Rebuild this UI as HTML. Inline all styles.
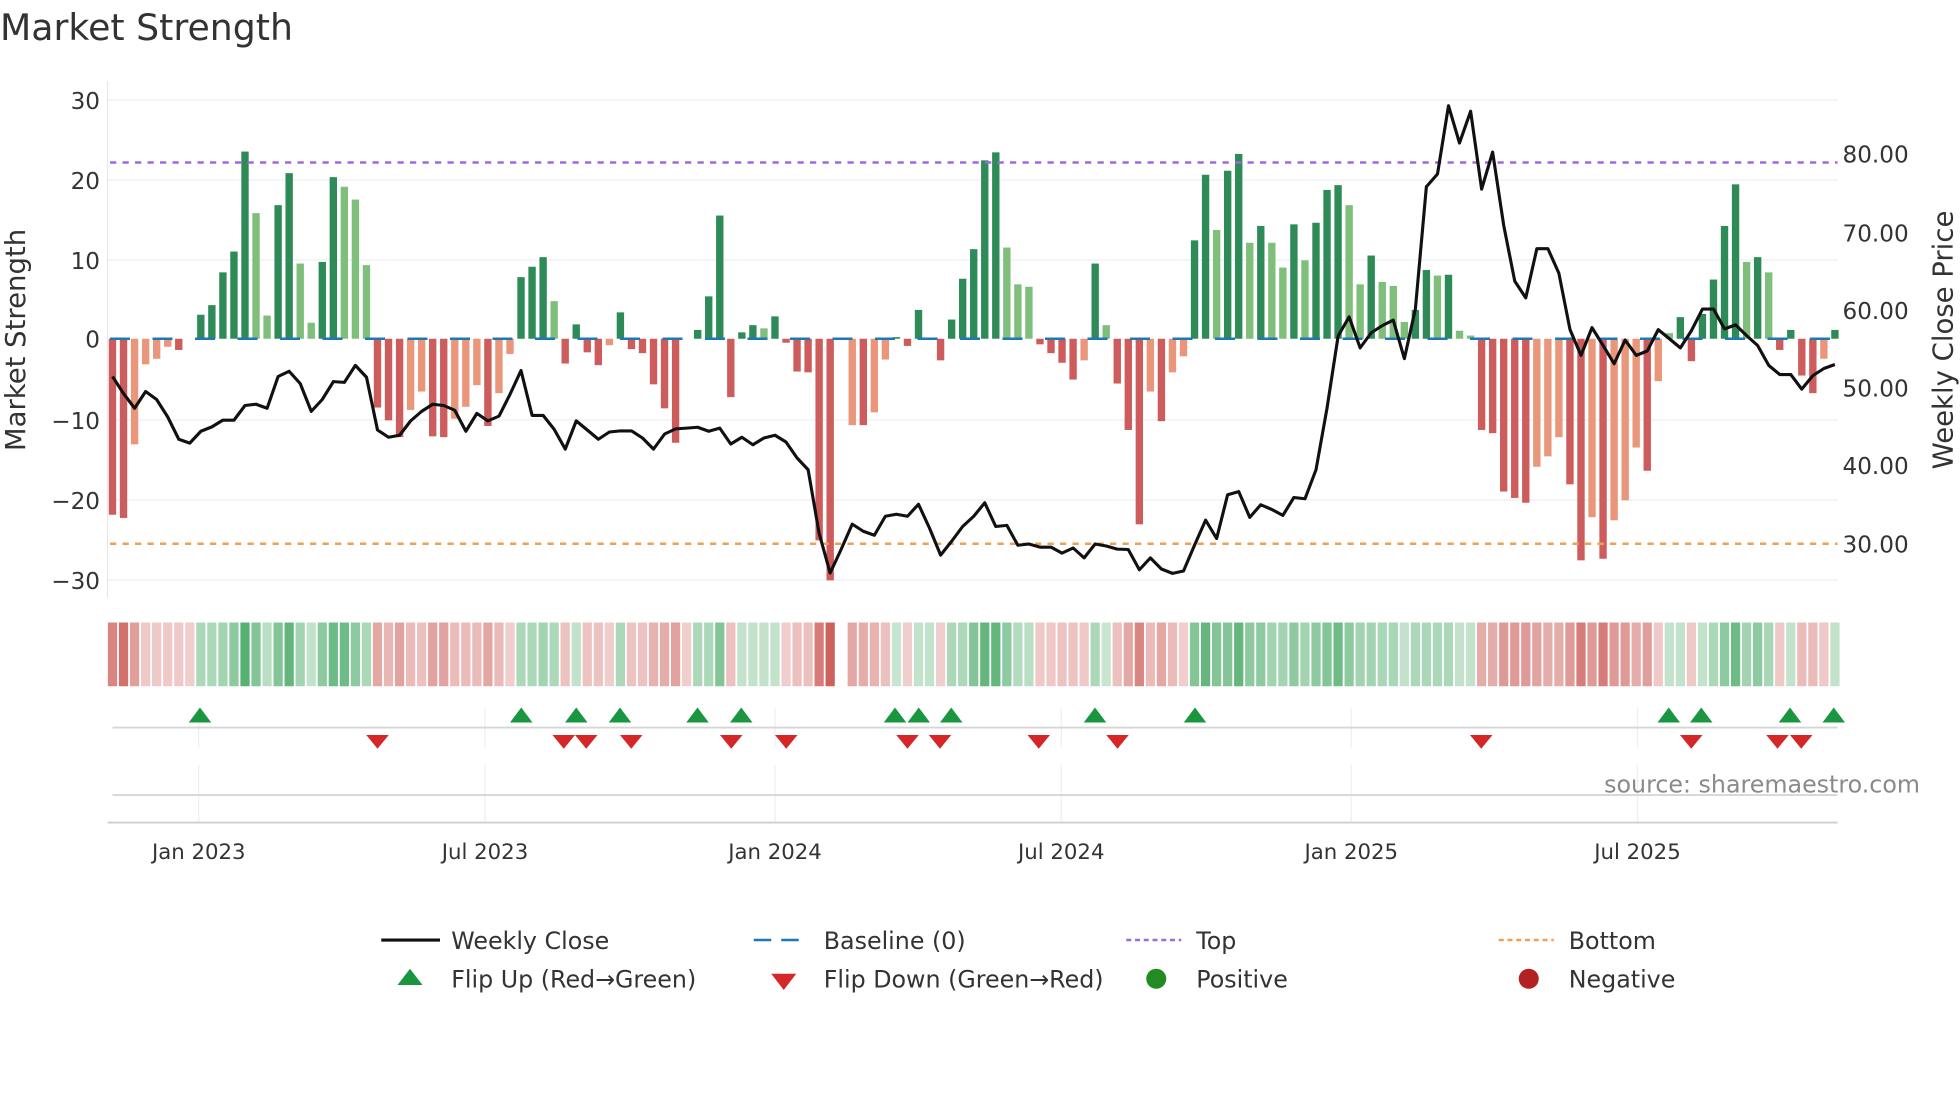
<!DOCTYPE html>
<html><head><meta charset="utf-8"><style>
html,body{margin:0;padding:0;background:#fff;}
svg{display:block;font-family:"DejaVu Sans","Liberation Sans",sans-serif;}
</style></head><body>
<svg id="s" width="1960" height="1102" viewBox="0 0 1568 881.6" xmlns="http://www.w3.org/2000/svg">
<rect width="1568" height="882" fill="#fff"/>
<text x="0" y="32" font-size="29" fill="#333">Market Strength</text>
<g id="grid" stroke="#eceff4" stroke-width="1">
<line x1="86" x2="1470" y1="80" y2="80"/><line x1="86" x2="1470" y1="144" y2="144"/><line x1="86" x2="1470" y1="208" y2="208"/><line x1="86" x2="1470" y1="336" y2="336"/><line x1="86" x2="1470" y1="400" y2="400"/><line x1="86" x2="1470" y1="464" y2="464"/>
</g>
<line x1="86" x2="86" y1="65" y2="478" stroke="#e6e8ee"/>
<g font-size="18.5" fill="#333" text-anchor="end">
<text x="80" y="87">30</text><text x="80" y="151">20</text><text x="80" y="215">10</text><text x="80" y="278">0</text><text x="80" y="343">−10</text><text x="80" y="407">−20</text><text x="80" y="471">−30</text>
</g>
<g font-size="18.5" fill="#333">
<text x="1474" y="130">80.00</text><text x="1474" y="193">70.00</text><text x="1474" y="255">60.00</text><text x="1474" y="317">50.00</text><text x="1474" y="379">40.00</text><text x="1474" y="442">30.00</text>
</g>
<text transform="translate(20,272) rotate(-90)" font-size="22" fill="#333" text-anchor="middle">Market Strength</text>
<text transform="translate(1562,272) rotate(-90)" font-size="22" fill="#333" text-anchor="middle">Weekly Close Price</text>
<g id="bars"></g>
<line x1="88" x2="1470" y1="271" y2="271" stroke="#1f77b4" stroke-width="2" stroke-dasharray="16,18"/>
<line x1="88" x2="1470" y1="130" y2="130" stroke="#9b6bdc" stroke-width="2" stroke-dasharray="5,5"/>
<line x1="88" x2="1470" y1="435" y2="435" stroke="#f0a050" stroke-width="2" stroke-dasharray="5,5"/>
<polyline id="price" fill="none" stroke="#111" stroke-width="2.5" stroke-linejoin="round"/>
<g id="heat"></g>
<g stroke="#eceff4"><line x1="159" x2="159" y1="566" y2="598"/><line x1="388" x2="388" y1="566" y2="598"/><line x1="620" x2="620" y1="566" y2="598"/><line x1="849" x2="849" y1="566" y2="598"/><line x1="1081" x2="1081" y1="566" y2="598"/><line x1="1310" x2="1310" y1="566" y2="598"/>
<line x1="159" x2="159" y1="612" y2="658"/><line x1="388" x2="388" y1="612" y2="658"/><line x1="620" x2="620" y1="612" y2="658"/><line x1="849" x2="849" y1="612" y2="658"/><line x1="1081" x2="1081" y1="612" y2="658"/><line x1="1310" x2="1310" y1="612" y2="658"/></g>
<line x1="90" x2="1470" y1="582" y2="582" stroke="#d6d6d6" stroke-width="1.5"/>
<line x1="90" x2="1470" y1="636" y2="636" stroke="#d6d6d6" stroke-width="1.5"/>
<line x1="86" x2="1470" y1="658" y2="658" stroke="#cfcfcf" stroke-width="1.5"/>
<g id="marks"></g>
<text x="1536" y="634" font-size="19" fill="#8a8a8a" text-anchor="end">source: sharemaestro.com</text>
<g font-size="17" fill="#333" text-anchor="middle">
<text x="159" y="687">Jan 2023</text><text x="388" y="687">Jul 2023</text><text x="620" y="687">Jan 2024</text><text x="849" y="687">Jul 2024</text><text x="1081" y="687">Jan 2025</text><text x="1310" y="687">Jul 2025</text>
</g>
<g font-size="19" fill="#333">
<line x1="305" x2="352" y1="752" y2="752" stroke="#111" stroke-width="2.5"/><text x="361" y="759">Weekly Close</text>
<line x1="603" x2="647" y1="752" y2="752" stroke="#1f77b4" stroke-width="2" stroke-dasharray="14,8"/><text x="659" y="759">Baseline (0)</text>
<line x1="901" x2="945" y1="752" y2="752" stroke="#9b6bdc" stroke-width="2" stroke-dasharray="4,3"/><text x="957" y="759">Top</text>
<line x1="1199" x2="1243" y1="752" y2="752" stroke="#f0a050" stroke-width="2" stroke-dasharray="4,3"/><text x="1255" y="759">Bottom</text>
<polygon points="318,788 338,788 328,775" fill="#1a9641"/><text x="361" y="790">Flip Up (Red→Green)</text>
<polygon points="617,779 637,779 627,792" fill="#d62728"/><text x="659" y="790">Flip Down (Green→Red)</text>
<circle cx="925" cy="783" r="8" fill="#228b22"/><text x="957" y="790">Positive</text>
<circle cx="1223" cy="783" r="8" fill="#b22222"/><text x="1255" y="790">Negative</text>
</g>
</svg>
<script>
var V=[-22,-22.4,-13.2,-3.2,-2.5,-1,-1.4,0,3,4.2,8.3,10.9,23.4,15.7,2.9,16.7,20.7,9.4,2,9.6,20.2,19,17.4,9.2,-8.6,-10.2,-12.3,-8.9,-6.6,-12.2,-12.3,-10,-8.5,-5.8,-10.9,-6.8,-1.9,7.7,9,10.2,4.7,
-3.1,1.8,-1.7,-3.3,-0.8,3.3,-1.3,-1.8,-5.7,-8.7,-13,0,1.1,5.3,15.4,-7.3,0.8,1.7,1.3,2.8,-0.5,-4.1,-4.2,-25.2,-30.2,0,-10.8,-10.8,-9.2,-2.6,0.2,-0.9,3.6,0,-2.7,2.4,7.5,11.2,22.3,23.3,
11.4,6.8,6.5,-0.7,-1.8,-3,-5.1,-2.7,9.4,1.7,-5.6,-11.4,-23.2,-6.6,-10.3,-4.2,-2.2,12.3,20.5,13.6,21,23.1,12,14.1,12,8.9,14.3,9.8,14.5,18.6,19.2,16.7,6.8,10.4,7.1,6.6,2.1,3.6,8.6,7.9,
8,1,0.4,-11.4,-11.8,-19.1,-19.9,-20.5,-16,-14.7,-12.3,-18.2,-27.7,-22.3,-27.5,-22.7,-20.2,-13.6,-16.5,-5.3,0.7,2.7,-2.8,3.1,7.4,14.1,19.3,9.6,10.2,8.3,-1.4,1.1,-4.6,-6.8,-2.5,1.1];
var C="RRSSSSRNDDDDDLLDDLLDDLLLRRRSSRRSSSRSSDDDL"+"RDRRSDRRRRRNDDDRDDLDRRRRRNSRSSDRDNRDDDDD"+"LLLRRRRSDLRRRSRSSDDLDDLDLLDLDDDLLDLLLDDL"+"DLLRRRRRSSSRRSRSSSRSLDRDDDDLDLRDRRSD";
var col={D:"#2e8b57",L:"#7fbf7b",R:"#cd5c5c",S:"#e9967a",N:"#fff"};
var zy=[750,793,830,788,808,852,908,918,888,877,860,860,823,820,830,750,737,768,838,808,763,765,722,752,885,903,898,862,838,820,823,835,888,843,862,850,795,735,848,848,883,
933,862,885,908,890,887,887,905,933,895,882,880,878,888,880,920,903,922,905,898,915,955,985,1145,1245,1185,1122,1140,1150,1102,1097,1102,1072,1132,1200,1165,1128,1102,1068,1128,
1125,1175,1172,1180,1180,1195,1182,1207,1172,1177,1185,1186,1237,1207,1235,1246,1240,1175,1112,1158,1048,1040,1105,1073,1085,1100,1055,1058,985,830,648,600,678,640,622,608,705,580,272,240,
68,162,82,278,185,370,510,552,428,428,490,632,697,627,672,718,658,697,686,632,655,678,635,580,580,630,620,647,672,722,745,745,782,748,730,720];
var H=[-2,-2.5,-1.5,-.6,-.6,-.6,-.6,-.5,1,1,1.2,1.6,2.6,1.8,.8,1.8,2.4,1.2,.6,1.6,2.2,2.2,1.6,1,-1.3,-1,-1.4,-.9,-.8,-1.4,-1.4,-.9,-.9,-.9,-1.3,-.9,-.5,1,1,1.2,1,
-.7,.6,-.7,-.7,-.5,1,-.7,-.7,-1.1,-1.2,-1.4,-.5,1,1,1.8,-.8,.6,.6,.6,.6,-.5,-.8,-.8,-2.2,-2.8,0,-1.3,-1.2,-1.1,-.8,.5,-.5,.6,.6,-.5,1,1,1.8,2.4,2.4,
1.6,.9,.8,-.6,-.6,-.7,-.7,-.6,1,.5,-.8,-1.3,-2,-.9,-1.3,-.9,-.5,1.8,2.4,1.8,1.8,2.4,1.6,1.6,1.2,1.2,1.6,1.2,1.6,1.8,2.2,1.6,1.2,1.2,1.1,1.1,.6,1,1,1,
1,.6,.6,-1.2,-1.2,-1.6,-1.6,-1.6,-1.4,-1.2,-1.2,-1.6,-2.2,-1.6,-2.2,-1.6,-1.6,-1.2,-1.5,-.6,.6,.6,-.6,.6,1,1.6,2.2,1.2,1.6,1.1,-.6,.6,-.9,-.9,-.6,.6];
var ns="http://www.w3.org/2000/svg",b=document.getElementById("bars"),h=document.getElementById("heat"),pts=[];
function X(i){return 90+i*8.833;}
for(var i=0;i<157;i++){
 var v=V[i],x=X(i),c=col[C[i]]||(v>=0?"#2e8b57":"#cd5c5c");
 if(v!=0){var r=document.createElementNS(ns,"rect");r.setAttribute("x",(x-2.95).toFixed(2));r.setAttribute("width","5.9");
 var y0=271,y1=271-v*6.4;r.setAttribute("y",Math.min(y0,y1).toFixed(2));r.setAttribute("height",Math.abs(y1-y0).toFixed(2));r.setAttribute("fill",c);b.appendChild(r);}
 var hv=H[i];if(hv!=0){var q=document.createElementNS(ns,"rect");q.setAttribute("x",(x-3.7).toFixed(2));q.setAttribute("width","7.4");q.setAttribute("y","498");q.setAttribute("height","51");
 var a=Math.min(1,Math.abs(hv)/2.8);q.setAttribute("fill",hv>0?"#3aa35a":"#c8504a");q.setAttribute("fill-opacity",(0.15+0.75*a).toFixed(2));h.appendChild(q);}
 pts.push(x.toFixed(1)+","+(271+(zy[i]-655)*0.3176).toFixed(1));
}
document.getElementById("price").setAttribute("points",pts.join(" "));
var m=document.getElementById("marks"),up=[160,417,461,496,558,593,716,735,761,876,956,1335,1361,1432,1467],dn=[302,451,469,505,585,629,726,752,831,894,1185,1353,1422,1441],s="";
up.forEach(function(x){s+='<polygon points="'+(x-9)+',578 '+(x+9)+',578 '+x+',566" fill="#1a9641"/>';});
dn.forEach(function(x){s+='<polygon points="'+(x-9)+',588 '+(x+9)+',588 '+x+',599" fill="#d62728"/>';});
m.innerHTML=s;
</script>
</body></html>
